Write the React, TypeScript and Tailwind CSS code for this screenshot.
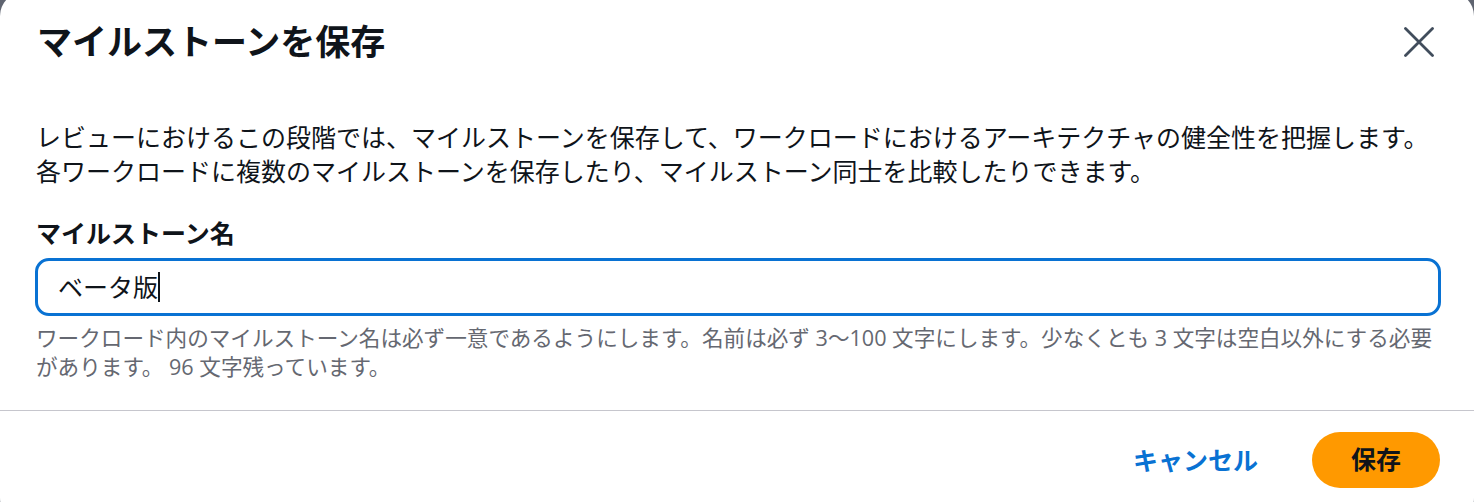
const FONT = {
  fontFamily: '"Open Sans", "Noto Sans CJK JP", sans-serif',
};

function CloseIcon() {
  return (
    <svg width="30" height="30" viewBox="0 0 30 30" fill="none">
      <path
        d="M1.5 1.5 L28.5 28.5 M28.5 1.5 L1.5 28.5"
        stroke="#414d5c"
        strokeWidth="2.8"
        strokeLinecap="round"
      />
    </svg>
  );
}

export default function App() {
  return (
    <div className="w-[1474px] h-[502px] overflow-hidden bg-[#5f6470]" style={FONT}>
      <div className="-mt-[8px] h-[530px] w-full rounded-[24px] bg-white flex flex-col">
        {/* header */}
        <div className="flex items-center justify-between pt-[30px] pl-[37px] pr-[40px]">
          <h2 className="text-[35px] leading-[40px] font-bold text-[#0f141a]">
            マイルストーンを保存
          </h2>
          <button className="flex items-center justify-center">
            <CloseIcon />
          </button>
        </div>

        {/* body */}
        <div className="pl-[36px] pr-[33px] pt-[58px]">
          <p className="text-[25px] leading-[34px] text-[#0f141a]">
            レビューにおけるこの段階では、マイルストーンを保存して、ワークロードにおけるアーキテクチャの健全性を把握します。
            <br />
            各ワークロードに複数のマイルストーンを保存したり、マイルストーン同士を比較したりできます。
          </p>

          <label className="block mt-[28px] text-[25px] leading-[34px] font-bold text-[#0f141a]">
            マイルストーン名
          </label>
          <div className="mt-[8px] -ml-[1px] h-[58px] rounded-[14px] border-[3px] border-[#0972d3] flex items-center pl-[20px]">
            <span className="text-[25px] leading-[34px] text-[#0f141a]">ベータ版</span>
            <span className="w-[2px] h-[30px] bg-[#0f141a]" />
          </div>
          <p className="mt-[7px] text-[21.6px] leading-[29px] text-[#656871]">
            ワークロード内のマイルストーン名は必ず一意であるようにします。名前は必ず 3〜100 文字にします。少なくとも 3 文字は空白以外にする必要があります。 96 文字残っています。
          </p>
        </div>

        {/* divider */}
        <div className="mt-[29px] h-px bg-[#c6c6cd]" />

        {/* footer */}
        <div className="flex items-center justify-end gap-[54px] pt-[21px] pr-[34px]">
          <button className="text-[25px] leading-[34px] font-bold text-[#0972d3]">
            キャンセル
          </button>
          <button className="h-[56px] px-[39px] rounded-full bg-[#ff9900] text-[25px] font-bold text-[#0f141a]">
            保存
          </button>
        </div>
      </div>
    </div>
  );
}
